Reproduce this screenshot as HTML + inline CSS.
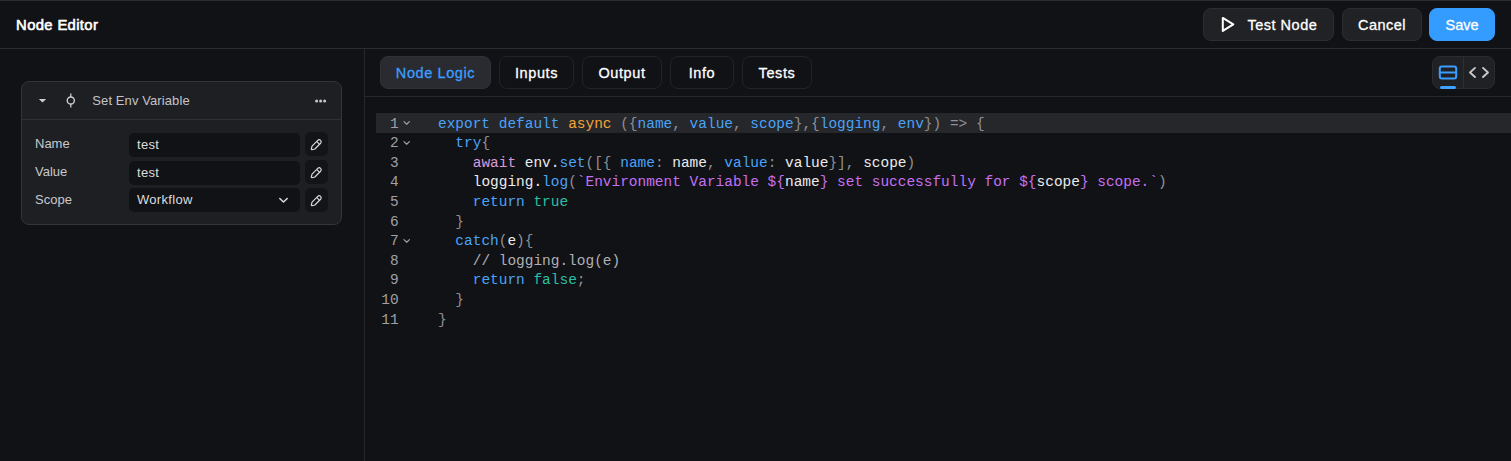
<!DOCTYPE html>
<html><head><meta charset="utf-8">
<style>
*{box-sizing:border-box;margin:0;padding:0}
html,body{width:1511px;height:461px;overflow:hidden;background:#111216;font-family:"Liberation Sans",sans-serif;color:#fff}
.abs{position:absolute}
#topline{left:0;top:0;width:1511px;height:1px;background:#2b2c31}
#hdr-line{left:0;top:48px;width:1511px;height:1px;background:#2b2c31}
#vline{left:364px;top:49px;width:1px;height:412px;background:#26272b}
#tab-line{left:365px;top:96px;width:1146px;height:1px;background:#26272b}
.title{left:16.1px;top:16.6px;font-size:14.8px;font-weight:normal;color:#fff;letter-spacing:0.36px;-webkit-text-stroke:0.6px #fff}
.btn{position:absolute;top:8px;height:33px;border-radius:8px;background:#212226;border:1px solid #2c2d32;font-size:14.5px;color:#fff;display:flex;align-items:center;justify-content:center;-webkit-text-stroke:0.3px currentColor}
.save{background:#349cff;border-color:#349cff}
.tab{position:absolute;top:56px;height:33px;border-radius:8px;border:1px solid #222327;font-size:14.5px;letter-spacing:0.6px;color:#fff;display:flex;align-items:center;justify-content:center;-webkit-text-stroke:0.3px currentColor}
.tab.act{background:#2a2b30;border-color:#303136;color:#3b9eff}
.card{left:21px;top:81px;width:321px;height:144px;background:#1e1f23;border:1px solid #34353a;border-radius:8px}
.sep{left:22px;top:119px;width:319px;height:1px;background:#303136}
.lbl{position:absolute;left:35px;font-size:13px;color:#c9c9cc}
.inp{position:absolute;left:129px;width:171px;height:24px;background:#111215;border-radius:5px;font-size:13px;color:#dcdcde}
.inp span{position:absolute;left:8px;top:4px;letter-spacing:0.3px}
.ebtn{position:absolute;left:304.8px;width:23.4px;height:24px;background:#131417;border-radius:5px}
.code{position:absolute;left:0;top:0;font-family:"Liberation Mono",monospace;font-size:14.465px;white-space:pre}
.ln{position:absolute;width:398.6px;text-align:right;color:#a0a0a4;font-family:"Liberation Mono",monospace;font-size:14.465px}
.cl{position:absolute;left:438px;font-family:"Liberation Mono",monospace;font-size:14.465px;white-space:pre;color:#909095}
.cm{color:#b0b0b4}.k{color:#4aa3f7}.o{color:#f7a336}.p{color:#c66ff3}.aw{color:#d99ad9}.t{color:#2bbfa4}.w{color:#ececec}.g{color:#9c9ca0}
</style></head><body>
<div class="abs" id="topline"></div>
<div class="abs title">Node Editor</div>
<div class="btn" style="left:1203px;width:131px">
  <svg class="abs" style="left:17px;top:7px" width="16" height="18" viewBox="0 0 16 18"><path d="M1.8 1.9 L12.3 8.4 L1.8 14.9 Z" fill="none" stroke="#fff" stroke-width="2" stroke-linejoin="round"/></svg>
  <span class="abs" style="left:43.5px;top:7.5px;letter-spacing:0.5px">Test Node</span>
</div>
<div class="btn" style="left:1342px;width:80px;letter-spacing:0.5px">Cancel</div>
<div class="btn save" style="left:1429px;width:66px">Save</div>
<div class="abs" id="hdr-line"></div>
<div class="abs" id="vline"></div>

<!-- tabs -->
<div class="tab act" style="left:380px;width:111px">Node Logic</div>
<div class="tab" style="left:499px;width:75px">Inputs</div>
<div class="tab" style="left:582px;width:80px">Output</div>
<div class="tab" style="left:670px;width:64px">Info</div>
<div class="tab" style="left:742px;width:70px">Tests</div>

<div class="abs" style="left:1432px;top:56px;width:63px;height:33px;border-radius:8px;background:#202125;border:1px solid #2a2b30"></div>
<div class="abs" style="left:1463px;top:57px;width:1px;height:31px;background:#2e2f34"></div>
<svg class="abs" style="left:1438px;top:65px" width="20" height="16" viewBox="0 0 20 16"><rect x="1.8" y="1.4" width="16.4" height="12" rx="2" fill="none" stroke="#3b9eff" stroke-width="2"/><line x1="2" y1="7.5" x2="18" y2="7.5" stroke="#3b9eff" stroke-width="2"/></svg>
<div class="abs" style="left:1440px;top:85.5px;width:16px;height:3px;border-radius:2px;background:#3ea2ff"></div>
<svg class="abs" style="left:1467px;top:65px" width="24" height="16" viewBox="0 0 24 16"><path d="M8 2.9 L3 7.45 L8 12 M16 2.9 L21 7.45 L16 12" fill="none" stroke="#c8c8cb" stroke-width="1.9" stroke-linecap="round" stroke-linejoin="round"/></svg>
<div class="abs" id="tab-line"></div>

<!-- card -->
<div class="abs card"></div>
<div class="abs sep"></div>
<svg class="abs" style="left:38px;top:98px" width="9" height="6" viewBox="0 0 9 6"><path d="M0.9 1.1 L8.1 1.1 L4.5 4.6 Z" fill="#d0d0d3"/></svg>
<svg class="abs" style="left:65px;top:92px" width="12" height="17" viewBox="0 0 12 17"><circle cx="5.8" cy="8.5" r="3.55" fill="none" stroke="#d0d0d3" stroke-width="1.4"/><line x1="5.8" y1="1.6" x2="5.8" y2="5" stroke="#d0d0d3" stroke-width="1.25"/><line x1="5.8" y1="12" x2="5.8" y2="15.4" stroke="#d0d0d3" stroke-width="1.25"/></svg>
<div class="abs" style="left:92.3px;top:92.6px;font-size:13px;color:#c4c4c7;letter-spacing:0.1px">Set Env Variable</div>
<svg class="abs" style="left:314px;top:97.5px" width="14" height="6" viewBox="0 0 14 6"><circle cx="2.6" cy="3" r="1.5" fill="#c8c8cb"/><circle cx="6.6" cy="3" r="1.5" fill="#c8c8cb"/><circle cx="10.6" cy="3" r="1.5" fill="#c8c8cb"/></svg>

<div class="lbl" style="top:136px">Name</div>
<div class="lbl" style="top:164px">Value</div>
<div class="lbl" style="top:192px">Scope</div>
<div class="inp" style="top:133px"><span>test</span></div>
<div class="inp" style="top:161px"><span>test</span></div>
<div class="inp" style="top:188px"><span>Workflow</span>
<svg class="abs" style="left:149px;top:8px" width="12" height="8" viewBox="0 0 12 8"><path d="M1.8 2.5 L5.5 6 L9.2 2.5" fill="none" stroke="#dcdcdf" stroke-width="1.5" stroke-linecap="round" stroke-linejoin="round"/></svg></div>
<div class="ebtn" style="top:132px"></div>
<div class="ebtn" style="top:160px"></div>
<div class="ebtn" style="top:188px"></div>

<!-- code -->
<div class="abs" style="left:376px;top:113px;width:1135px;height:20px;background:#26272b"></div>
<div class="ln" style="top:115.5px">1</div>
<div class="cl" style="top:115.5px"><span class="k">export</span> <span class="k">default</span> <span class="o">async</span> ({<span class="k">name</span>, <span class="k">value</span>, <span class="k">scope</span>},{<span class="k">logging</span>, <span class="k">env</span>}) =&gt; {</div>
<div class="ln" style="top:135.1px">2</div>
<div class="cl" style="top:135.1px">  <span class="k">try</span>{</div>
<div class="ln" style="top:154.7px">3</div>
<div class="cl" style="top:154.7px">    <span class="aw">await</span> <span class="w">env.</span><span class="k">set</span>([{ <span class="k">name</span>: <span class="w">name</span>, <span class="k">value</span>: <span class="w">value</span>}], <span class="w">scope</span>)</div>
<div class="ln" style="top:174.3px">4</div>
<div class="cl" style="top:174.3px">    <span class="w">logging.</span><span class="k">log</span>(<span class="p">`Environment Variable ${</span><span class="w">name</span><span class="p">} set successfully for ${</span><span class="w">scope</span><span class="p">} scope.`</span>)</div>
<div class="ln" style="top:193.9px">5</div>
<div class="cl" style="top:193.9px">    <span class="k">return</span> <span class="t">true</span></div>
<div class="ln" style="top:213.5px">6</div>
<div class="cl" style="top:213.5px">  }</div>
<div class="ln" style="top:233.1px">7</div>
<div class="cl" style="top:233.1px">  <span class="k">catch</span>(<span class="w">e</span>){</div>
<div class="ln" style="top:252.7px">8</div>
<div class="cl" style="top:252.7px">    <span class="cm">// logging.log(e)</span></div>
<div class="ln" style="top:272.3px">9</div>
<div class="cl" style="top:272.3px">    <span class="k">return</span> <span class="t">false</span>;</div>
<div class="ln" style="top:291.9px">10</div>
<div class="cl" style="top:291.9px">  }</div>
<div class="ln" style="top:311.5px">11</div>
<div class="cl" style="top:311.5px">}</div>
<svg class="abs" style="left:403px;top:120.0px" width="8" height="6" viewBox="0 0 8 6"><path d="M1 1.6 L3.7 4.2 L6.4 1.6" fill="none" stroke="#a0a0a4" stroke-width="1.2" stroke-linecap="round" stroke-linejoin="round"/></svg>
<svg class="abs" style="left:403px;top:139.6px" width="8" height="6" viewBox="0 0 8 6"><path d="M1 1.6 L3.7 4.2 L6.4 1.6" fill="none" stroke="#a0a0a4" stroke-width="1.2" stroke-linecap="round" stroke-linejoin="round"/></svg>
<svg class="abs" style="left:403px;top:237.6px" width="8" height="6" viewBox="0 0 8 6"><path d="M1 1.6 L3.7 4.2 L6.4 1.6" fill="none" stroke="#a0a0a4" stroke-width="1.2" stroke-linecap="round" stroke-linejoin="round"/></svg>
<svg class="abs" style="left:309px;top:137.5px" width="14" height="14" viewBox="0 0 14 14"><g transform="rotate(-45 7 7)" fill="none" stroke="#d8d8db" stroke-width="1.2" stroke-linejoin="round"><path d="M11.5 5 A2 2 0 0 1 11.5 9 L3.4 9 L0.8 7.5 L0.8 6.5 L3.4 5 Z"/><path d="M10 5.2 L10 8.8"/></g></svg>
<svg class="abs" style="left:309px;top:165.5px" width="14" height="14" viewBox="0 0 14 14"><g transform="rotate(-45 7 7)" fill="none" stroke="#d8d8db" stroke-width="1.2" stroke-linejoin="round"><path d="M11.5 5 A2 2 0 0 1 11.5 9 L3.4 9 L0.8 7.5 L0.8 6.5 L3.4 5 Z"/><path d="M10 5.2 L10 8.8"/></g></svg>
<svg class="abs" style="left:309px;top:193.5px" width="14" height="14" viewBox="0 0 14 14"><g transform="rotate(-45 7 7)" fill="none" stroke="#d8d8db" stroke-width="1.2" stroke-linejoin="round"><path d="M11.5 5 A2 2 0 0 1 11.5 9 L3.4 9 L0.8 7.5 L0.8 6.5 L3.4 5 Z"/><path d="M10 5.2 L10 8.8"/></g></svg>
</body></html>
